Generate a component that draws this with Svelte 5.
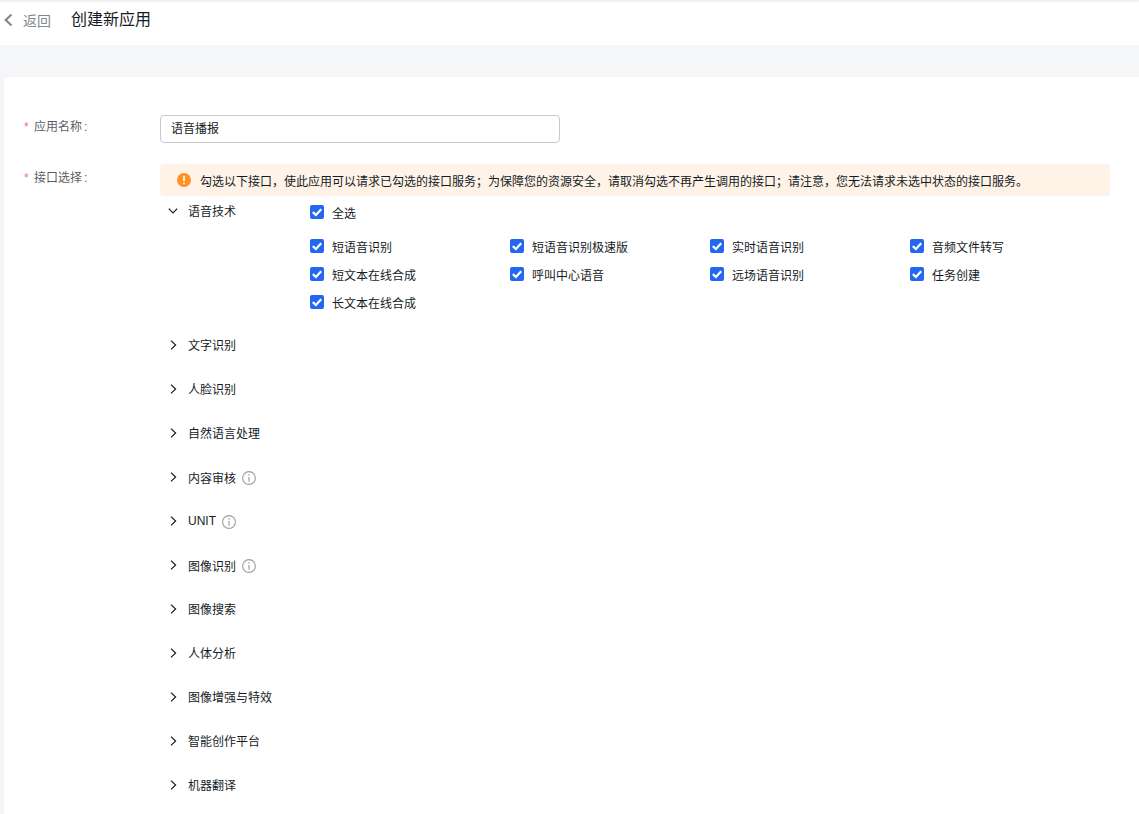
<script lang="ts">
	const voiceApis = [
		'短语音识别',
		'短语音识别极速版',
		'实时语音识别',
		'音频文件转写',
		'短文本在线合成',
		'呼叫中心语音',
		'远场语音识别',
		'任务创建',
		'长文本在线合成'
	];

	const groups = [
		{ name: '文字识别' },
		{ name: '人脸识别' },
		{ name: '自然语言处理' },
		{ name: '内容审核', info: true },
		{ name: 'UNIT', info: true },
		{ name: '图像识别', info: true },
		{ name: '图像搜索' },
		{ name: '人体分析' },
		{ name: '图像增强与特效' },
		{ name: '智能创作平台' },
		{ name: '机器翻译' }
	];

	// full-width punctuation, written as escapes
	const notice =
		'勾选以下接口\uFF0C使此应用可以请求已勾选的接口服务\uFF1B为保障您的资源安全\uFF0C请取消勾选不再产生调用的接口\uFF1B请注意\uFF0C您无法请求未选中状态的接口服务\u3002';
</script>

{#snippet check(label: string)}
	<label class="check">
		<span class="box">
			<svg width="14" height="14" viewBox="0 0 14 14" fill="none">
				<path d="M2.8 7.1 5.9 10 11.2 4.2" stroke="#fff" stroke-width="2.2" />
			</svg>
		</span>
		<span>{label}</span>
	</label>
{/snippet}

<div class="page">
	<header class="topbar">
		<button class="back">
			<svg width="10" height="14" viewBox="0 0 10 14" fill="none">
				<path d="M8.5 1.5 2.7 7l5.8 5.5" stroke="#85888e" stroke-width="2.2" />
			</svg>
			<span>返回</span>
		</button>
		<h1>创建新应用</h1>
	</header>

	<main class="card">
		<div class="row name-row">
			<div class="label"><i>*</i>应用名称<b>:</b></div>
			<div class="input">语音播报</div>
		</div>

		<div class="row api-row">
			<div class="label"><i>*</i>接口选择<b>:</b></div>
			<div class="control">
				<div class="alert">
					<svg width="14" height="14" viewBox="0 0 14 14">
						<circle cx="7" cy="7" r="7" fill="#ff9326" />
						<rect x="6.2" y="3" width="1.6" height="5.2" rx="0.6" fill="#fff" />
						<rect x="6.2" y="9.4" width="1.6" height="1.6" rx="0.6" fill="#fff" />
					</svg>
					<span>{notice}</span>
				</div>

				<section class="open-group">
					<div class="group-title">
						<svg class="arrow" width="10" height="10" viewBox="0 0 10 10" fill="none">
							<path d="M.8 2.6 5 6.8l4.2-4.2" stroke="#151b26" stroke-width="1.2" />
						</svg>
						<span>语音技术</span>
					</div>
					<div class="group-body">
						<div class="select-all">{@render check('全选')}</div>
						<div class="api-grid">
							{#each voiceApis as api}
								{@render check(api)}
							{/each}
						</div>
					</div>
				</section>

				{#each groups as group}
					<div class="group-title closed" class:has-info={group.info}>
						<svg class="arrow" width="10" height="10" viewBox="0 0 10 10" fill="none">
							<path d="M3 .6 7.6 5 3 9.4" stroke="#151b26" stroke-width="1.2" />
						</svg>
						<span class="group-name">{group.name}</span>
						{#if group.info}
							<svg class="info" width="14" height="14" viewBox="0 0 14 14" fill="none">
								<circle cx="7" cy="7" r="6.4" stroke="#9a9da3" stroke-width="1.1" />
								<path d="M7 6v4.6M7 3.3v1.4" stroke="#9a9da3" stroke-width="1.2" />
							</svg>
						{/if}
					</div>
				{/each}
			</div>
		</div>
	</main>
</div>

<style>
	:global(body) {
		margin: 0;
		background: #f5f6f8;
	}

	.page {
		height: 814px;
		overflow: hidden;
		font-family: 'Liberation Sans', 'Noto Sans CJK SC', sans-serif;
		font-size: 12px;
		color: #151b26;
		background: #f5f6f8;
	}

	.topbar {
		display: flex;
		align-items: center;
		height: 45px;
		padding: 0 0 5px 3px;
		box-sizing: border-box;
		background: #fff;
		box-shadow: inset 0 3px 3px -2px rgba(0, 0, 0, 0.1);
		margin-bottom: 32px;
	}

	.back {
		display: flex;
		align-items: center;
		gap: 10px;
		padding: 0;
		border: 0;
		background: none;
		font: inherit;
		font-size: 14px;
		color: #85888e;
	}

	.topbar h1 {
		margin: 0 0 0 20px;
		font-size: 16px;
		font-weight: 400;
		line-height: 24px;
		color: #151b26;
	}

	.card {
		margin-left: 4px;
		height: 760px;
		padding: 38px 0 0 20px;
		background: #fff;
		border-radius: 4px 0 0 0;
	}

	.row {
		display: flex;
	}

	.name-row {
		margin-bottom: 21px;
	}

	.label {
		width: 136px;
		flex-shrink: 0;
		line-height: 24px;
		color: #5c5f66;
	}

	.api-row .label {
		padding-top: 2px;
	}

	.label i {
		display: inline-block;
		width: 10px;
		font-style: normal;
		color: #f0717e;
	}

	.label b {
		margin-left: 2px;
		font-weight: 400;
	}

	.input {
		box-sizing: border-box;
		width: 400px;
		height: 28px;
		padding: 0 10px;
		line-height: 26px;
		border: 1px solid #c8cacd;
		border-radius: 4px;
	}

	.control {
		width: 950px;
	}

	.alert {
		display: flex;
		align-items: center;
		gap: 9px;
		height: 32px;
		padding-left: 17px;
		margin-bottom: 2px;
		background: #fff3e7;
		border-radius: 4px;
	}

	.open-group {
		display: flex;
		height: 134px;
	}

	.group-title {
		display: flex;
		align-items: center;
		height: 24px;
		padding-left: 8px;
		width: 142px;
	}

	.group-title.closed {
		width: auto;
		height: 24px;
		margin-bottom: 20px;
	}

	.arrow {
		margin-top: 2px;
		margin-right: 10px;
		flex-shrink: 0;
	}

	.has-info .group-name {
		padding-top: 2px;
	}

	.info {
		margin-top: 4px;
		margin-left: 6px;
	}

	.group-body {
		flex: 1;
	}

	.select-all {
		height: 36px;
		padding-top: 2px;
		box-sizing: border-box;
	}

	.api-grid {
		display: grid;
		grid-template-columns: repeat(4, 200px);
		grid-auto-rows: 28px;
		margin-top: -2px;
	}

	.check {
		display: flex;
		align-items: center;
		gap: 8px;
		height: 28px;
	}

	.select-all .check {
		height: 24px;
	}

	.box {
		display: flex;
		align-items: center;
		justify-content: center;
		width: 14px;
		height: 14px;
		background: #2468f2;
		border-radius: 2px;
	}
</style>
